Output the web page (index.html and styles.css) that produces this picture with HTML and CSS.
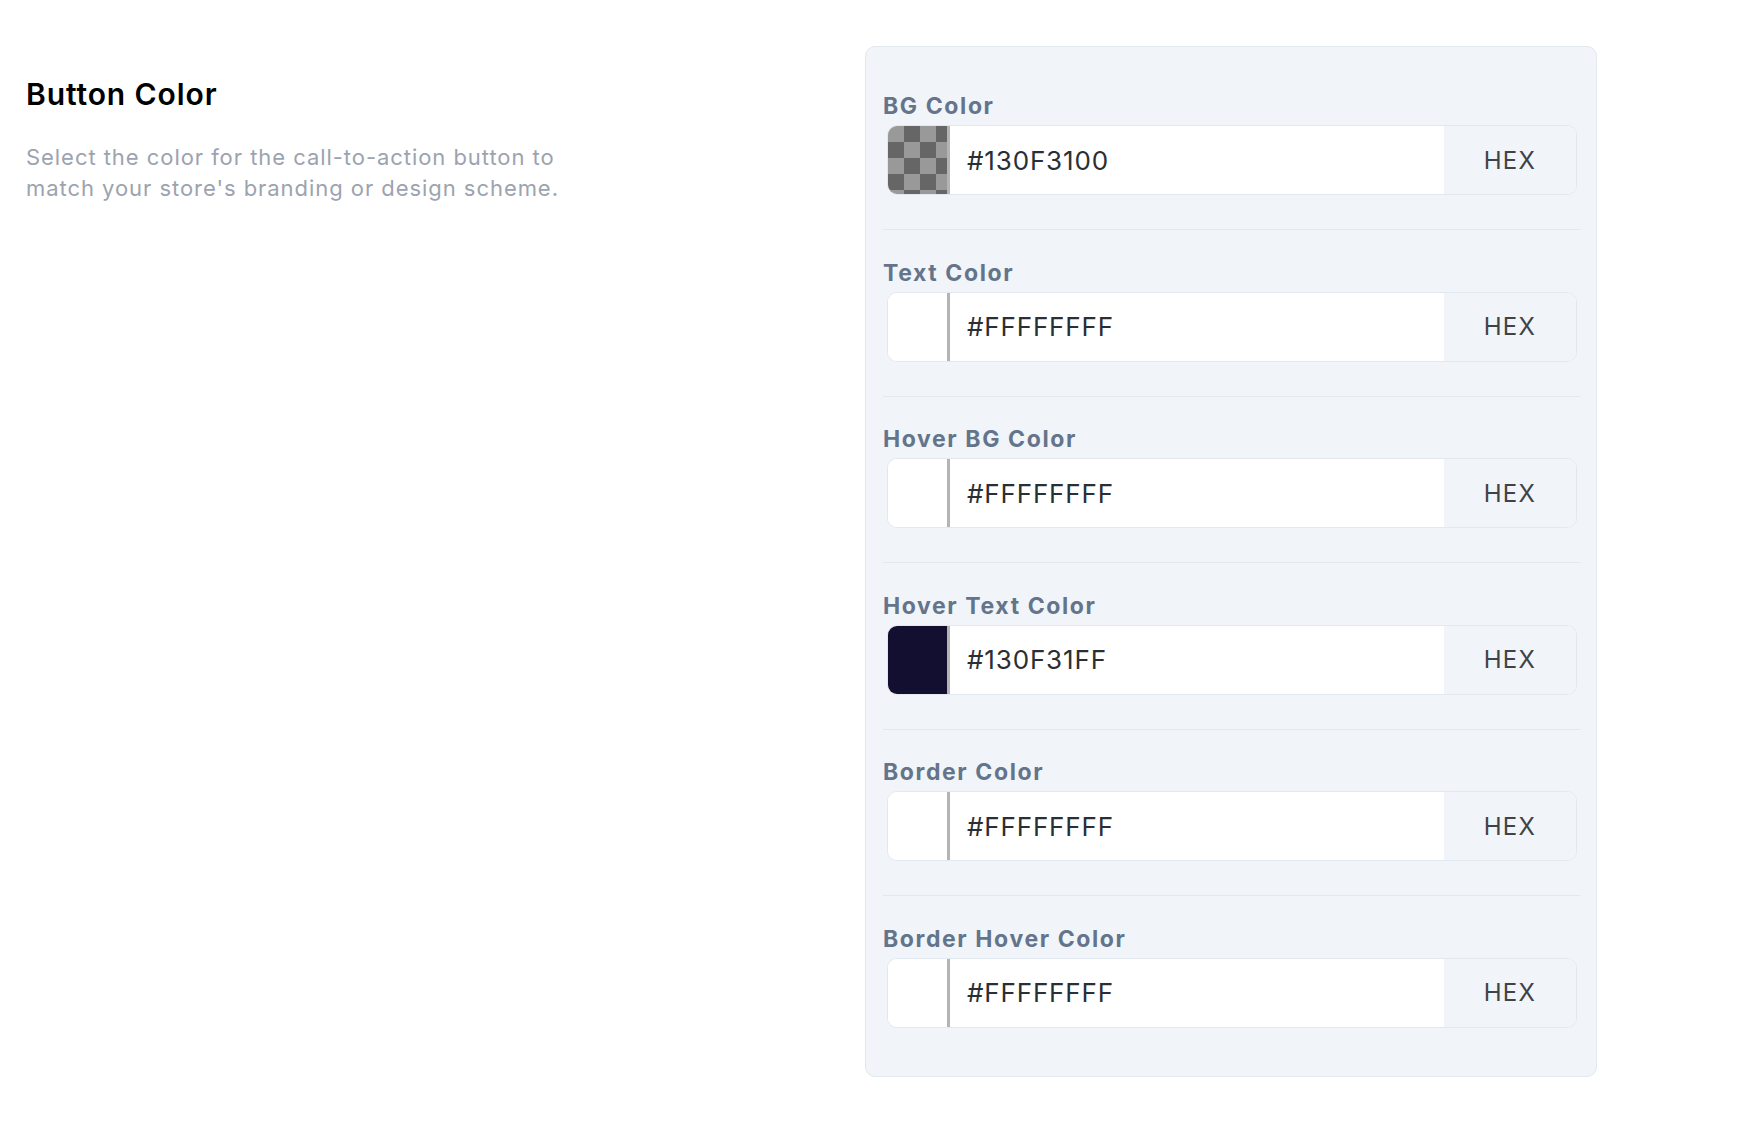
FILE: index.html
```html
<!DOCTYPE html>
<html lang="en">

<head>
    <meta charset="UTF-8">
    <meta name="viewport" content="width=device-width, initial-scale=1.0">
    <title>Button Color</title>
    <link rel="stylesheet" href="styles.css">
</head>

<body>
    <div class="page">
        <div class="intro">
            <h2>Button Color</h2>
            <p>Select the color for the call-to-action button to match your store's branding or design scheme.</p>
        </div>

        <div class="panel">
            <div class="color-field">
                <label>BG Color</label>
                <div class="color-input">
                    <span class="swatch checker"></span>
                    <input type="text" value="#130F3100">
                    <span class="format">HEX</span>
                </div>
            </div>
            <div class="color-field">
                <label>Text Color</label>
                <div class="color-input">
                    <span class="swatch"></span>
                    <input type="text" value="#FFFFFFFF">
                    <span class="format">HEX</span>
                </div>
            </div>
            <div class="color-field">
                <label>Hover BG Color</label>
                <div class="color-input">
                    <span class="swatch"></span>
                    <input type="text" value="#FFFFFFFF">
                    <span class="format">HEX</span>
                </div>
            </div>
            <div class="color-field">
                <label>Hover Text Color</label>
                <div class="color-input">
                    <span class="swatch dark"></span>
                    <input type="text" value="#130F31FF">
                    <span class="format">HEX</span>
                </div>
            </div>
            <div class="color-field">
                <label>Border Color</label>
                <div class="color-input">
                    <span class="swatch"></span>
                    <input type="text" value="#FFFFFFFF">
                    <span class="format">HEX</span>
                </div>
            </div>
            <div class="color-field">
                <label>Border Hover Color</label>
                <div class="color-input">
                    <span class="swatch"></span>
                    <input type="text" value="#FFFFFFFF">
                    <span class="format">HEX</span>
                </div>
            </div>
        </div>
    </div>
</body>

</html>
```

FILE: styles.css
```css
body {
    font-family: Inter, "Noto Sans", sans-serif;
    background-color: #ffffff;
    margin: 0;
}

.page {
    display: flex;
    align-items: flex-start;
    padding: 46px 0 0 26px;
}

.intro {
    width: 839px;
}

.intro h2 {
    font-size: 30px;
    font-weight: 600;
    letter-spacing: 0.9px;
    color: #000000;
    margin: 30px 0 0;
    line-height: 36px;
}

.intro p {
    font-size: 22px;
    line-height: 31px;
    letter-spacing: 0.95px;
    color: #9ca3af;
    max-width: 560px;
    margin: 30px 0 0;
}

.panel {
    width: 697px;
    background-color: #f1f5f9;
    border: 1px solid #e2e8f0;
    border-radius: 10px;
    padding: 43px 16px 48px 17px;
}

.color-field {
    border-bottom: 1px solid #e2e8f0;
    padding-bottom: 34px;
    margin-bottom: 26.5px;
}

.color-field:last-child {
    border-bottom: none;
    padding-bottom: 0;
    margin-bottom: 0;
}

.color-field label {
    display: block;
    font-size: 23px;
    font-weight: 700;
    letter-spacing: 1.6px;
    line-height: 32px;
    color: #64748b;
    margin-bottom: 3px;
}

.color-input {
    display: flex;
    height: 68px;
    margin: 0 3px 0 4px;
    background-color: #ffffff;
    border: 1px solid #e2e8f0;
    border-radius: 10px;
    overflow: hidden;
}

.swatch {
    width: 59px;
    flex-shrink: 0;
    background-color: #ffffff;
    border-right: 3px solid #b4b4b4;
}

.swatch.dark {
    background-color: #130f31;
}

.swatch.checker {
    background: conic-gradient(#666666 25%, #999999 0 50%, #666666 0 75%, #999999 0);
    background-size: 32px 32px;
}

.color-input input {
    flex: 1;
    min-width: 0;
    border: none;
    outline: none;
    padding: 0 0 0 17px;
    font-family: Inter, "Noto Sans", sans-serif;
    font-size: 26px;
    letter-spacing: 0.85px;
    color: #2a2f35;
    background: transparent;
}

.format {
    width: 132px;
    display: flex;
    align-items: center;
    justify-content: center;
    background-color: #f1f5f9;
    font-size: 24px;
    letter-spacing: 1.3px;
    color: #3f4347;
}
```
